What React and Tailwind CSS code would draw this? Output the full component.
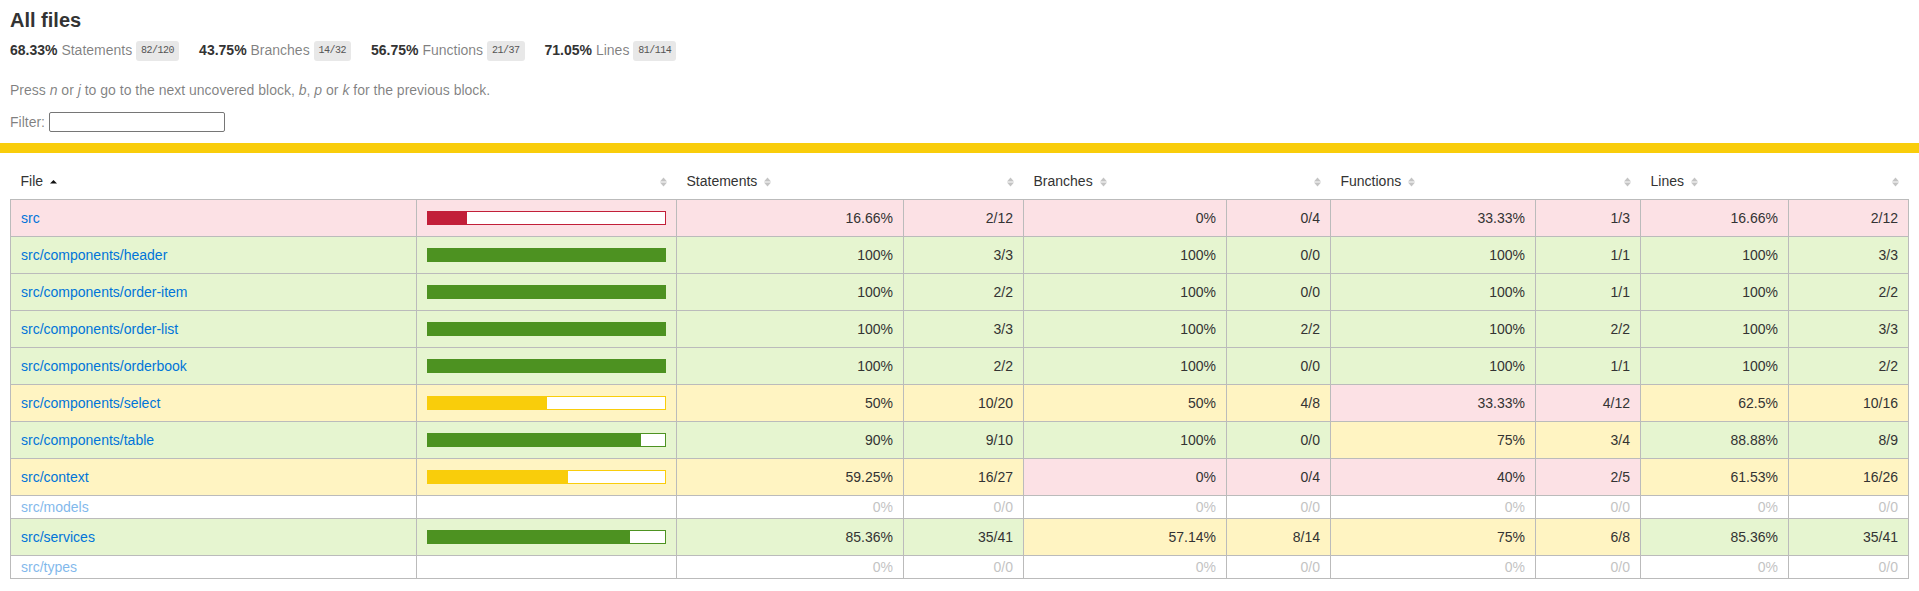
import React from 'react';

const rows = [
  { name: 'src', pct: 16.66, s: ['16.66%', '2/12', 'low'], b: ['0%', '0/4', 'low'], f: ['33.33%', '1/3', 'low'], l: ['16.66%', '2/12', 'low'] },
  { name: 'src/components/header', pct: 100, s: ['100%', '3/3', 'high'], b: ['100%', '0/0', 'high'], f: ['100%', '1/1', 'high'], l: ['100%', '3/3', 'high'] },
  { name: 'src/components/order-item', pct: 100, s: ['100%', '2/2', 'high'], b: ['100%', '0/0', 'high'], f: ['100%', '1/1', 'high'], l: ['100%', '2/2', 'high'] },
  { name: 'src/components/order-list', pct: 100, s: ['100%', '3/3', 'high'], b: ['100%', '2/2', 'high'], f: ['100%', '2/2', 'high'], l: ['100%', '3/3', 'high'] },
  { name: 'src/components/orderbook', pct: 100, s: ['100%', '2/2', 'high'], b: ['100%', '0/0', 'high'], f: ['100%', '1/1', 'high'], l: ['100%', '2/2', 'high'] },
  { name: 'src/components/select', pct: 50, s: ['50%', '10/20', 'medium'], b: ['50%', '4/8', 'medium'], f: ['33.33%', '4/12', 'low'], l: ['62.5%', '10/16', 'medium'] },
  { name: 'src/components/table', pct: 90, s: ['90%', '9/10', 'high'], b: ['100%', '0/0', 'high'], f: ['75%', '3/4', 'medium'], l: ['88.88%', '8/9', 'high'] },
  { name: 'src/context', pct: 59.25, s: ['59.25%', '16/27', 'medium'], b: ['0%', '0/4', 'low'], f: ['40%', '2/5', 'low'], l: ['61.53%', '16/26', 'medium'] },
  { name: 'src/models', empty: true },
  { name: 'src/services', pct: 85.36, s: ['85.36%', '35/41', 'high'], b: ['57.14%', '8/14', 'medium'], f: ['75%', '6/8', 'medium'], l: ['85.36%', '35/41', 'high'] },
  { name: 'src/types', empty: true },
];

const bg = { low: 'bg-[#fce1e5]', medium: 'bg-[#fff4c2]', high: 'bg-[#e6f5d0]' };
const fill = { low: 'bg-[#c21f39]', medium: 'bg-[#f9cd0b]', high: 'bg-[#4d9221]' };
const line = { low: 'border-[#c21f39]', medium: 'border-[#f9cd0b]', high: 'border-[#4d9221]' };

function Sorter({ asc }) {
  return (
    <svg width="7" height="10" viewBox="0 0 7 10" className="inline-block ml-[7px]">
      {asc ? (
        <path d="M3.5 3 L7 6.5 L0 6.5 Z" fill="#111" />
      ) : (
        <>
          <path d="M3.5 0.5 L7 4.5 L0 4.5 Z" fill="#c4c4c4" />
          <path d="M0 5.5 L7 5.5 L3.5 9.5 Z" fill="#c4c4c4" />
        </>
      )}
    </svg>
  );
}

function Stat({ pct, label, frac }) {
  return (
    <div className="pr-5">
      <span className="font-bold">{pct} </span>
      <span className="text-black/50">{label}</span>{' '}
      <span className="inline-block h-[20px] leading-[20px] px-[5px] rounded-[3px] bg-[#e8e8e8] text-[#555] text-[10px] tracking-[-0.5px] align-middle font-['Liberation_Mono',Consolas,monospace]">
        {frac}
      </span>
    </div>
  );
}

const td = 'px-[10px] py-[10px] border-r border-[#bbb]';
const tdEmpty = 'px-[10px] py-[4px] leading-[14px] border-r border-[#bbb] opacity-50 text-[#888]';

export default function App() {
  return (
    <div className="min-h-screen bg-white text-[14px] leading-[16px] text-[#333] font-['Liberation_Sans',Arial,Helvetica,sans-serif]">
      <div className="px-[10px] pt-[10px] pb-[11px]">
        <h1 className="text-[20px] leading-[20px] font-bold">All files</h1>
        <div className="flex pt-[11px] pb-[10px]">
          <Stat pct="68.33%" label="Statements" frac="82/120" />
          <Stat pct="43.75%" label="Branches" frac="14/32" />
          <Stat pct="56.75%" label="Functions" frac="21/37" />
          <Stat pct="71.05%" label="Lines" frac="81/114" />
        </div>
        <p className="mt-[11px] text-black/50">
          Press <em>n</em> or <em>j</em> to go to the next uncovered block, <em>b</em>, <em>p</em> or <em>k</em> for the previous block.
        </p>
        <div className="mt-[14px] flex items-center text-black/50">
          <span>Filter:</span>
          <input type="search" className="ml-[4px] w-[176px] h-[20px] border border-[#767676] rounded-[2px] bg-white outline-none" />
        </div>
      </div>
      <div className="h-[10px] bg-[#f9cd0b]" />
      <div className="p-[10px]">
        <table className="w-full table-fixed border-collapse">
          <colgroup>
            <col className="w-[406px]" />
            <col className="w-[260px]" />
            <col className="w-[227px]" />
            <col className="w-[120px]" />
            <col className="w-[203px]" />
            <col className="w-[104px]" />
            <col className="w-[205px]" />
            <col className="w-[105px]" />
            <col className="w-[148px]" />
            <col className="w-[120px]" />
          </colgroup>
          <thead>
            <tr>
              <th className="p-[10px] text-left font-normal whitespace-nowrap">File<Sorter asc /></th>
              <th className="p-[10px] text-right font-normal"><Sorter /></th>
              <th className="p-[10px] text-left font-normal whitespace-nowrap">Statements<Sorter /></th>
              <th className="p-[10px] text-right font-normal"><Sorter /></th>
              <th className="p-[10px] text-left font-normal whitespace-nowrap">Branches<Sorter /></th>
              <th className="p-[10px] text-right font-normal"><Sorter /></th>
              <th className="p-[10px] text-left font-normal whitespace-nowrap">Functions<Sorter /></th>
              <th className="p-[10px] text-right font-normal"><Sorter /></th>
              <th className="p-[10px] text-left font-normal whitespace-nowrap">Lines<Sorter /></th>
              <th className="p-[10px] text-right font-normal"><Sorter /></th>
            </tr>
          </thead>
          <tbody className="border border-[#bbb]">
            {rows.map((r) =>
              r.empty ? (
                <tr key={r.name} className="border-b border-[#bbb]">
                  <td className={tdEmpty + ' whitespace-nowrap'}>
                    <a href="#" className="text-[#0074d9]">{r.name}</a>
                  </td>
                  <td className={tdEmpty}></td>
                  {[0, 1, 2, 3].map((i) => (
                    <React.Fragment key={i}>
                      <td className={tdEmpty + ' text-right'}>0%</td>
                      <td className={tdEmpty + ' text-right' + (i === 3 ? ' border-r-0' : '')}>0/0</td>
                    </React.Fragment>
                  ))}
                </tr>
              ) : (
                <tr key={r.name} className="border-b border-[#bbb]">
                  <td className={`${td} ${bg[r.s[2]]} whitespace-nowrap`}>
                    <a href="#" className="text-[#0074d9]">{r.name}</a>
                  </td>
                  <td className={`${td} ${bg[r.s[2]]}`}>
                    <div className={`flex h-[14px] border ${line[r.s[2]]}`}>
                      <div className={fill[r.s[2]]} style={{ width: r.pct + '%' }} />
                      <div className="flex-1 bg-white" />
                    </div>
                  </td>
                  {[r.s, r.b, r.f, r.l].map((m, i) => (
                    <React.Fragment key={i}>
                      <td className={`${td} ${bg[m[2]]} text-right`}>{m[0]}</td>
                      <td className={`${td} ${bg[m[2]]} text-right ${i === 3 ? 'border-r-0' : ''}`}>{m[1]}</td>
                    </React.Fragment>
                  ))}
                </tr>
              )
            )}
          </tbody>
        </table>
      </div>
    </div>
  );
}
